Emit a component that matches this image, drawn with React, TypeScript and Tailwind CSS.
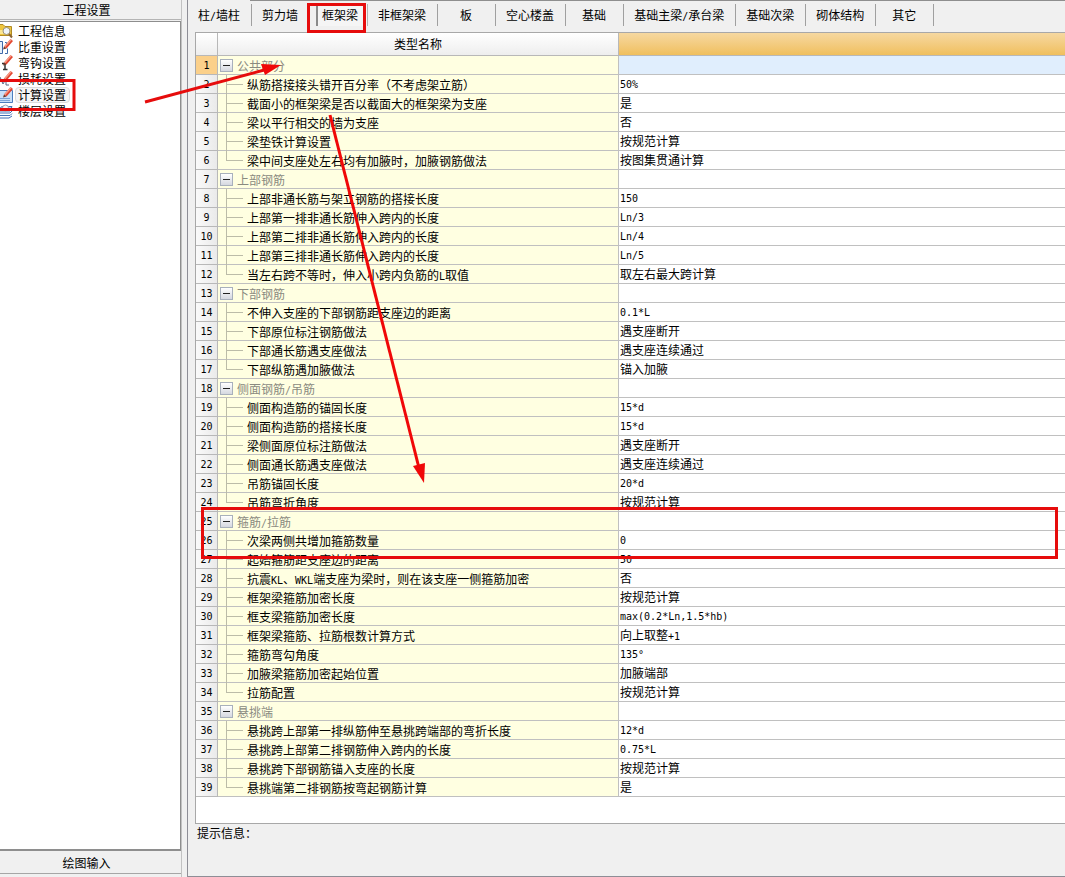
import { Fragment, type ReactNode } from 'react';

type Row = { group: string } | { name: string; value: string };

const tabs = ['柱/墙柱', '剪力墙', '框架梁', '非框架梁', '板', '空心楼盖', '基础', '基础主梁/承台梁', '基础次梁', '砌体结构', '其它'];

const rows: Row[] = [
  { group: '公共部分' },
  { name: '纵筋搭接接头错开百分率（不考虑架立筋）', value: '50%' },
  { name: '截面小的框架梁是否以截面大的框架梁为支座', value: '是' },
  { name: '梁以平行相交的墙为支座', value: '否' },
  { name: '梁垫铁计算设置', value: '按规范计算' },
  { name: '梁中间支座处左右均有加腋时，加腋钢筋做法', value: '按图集贯通计算' },
  { group: '上部钢筋' },
  { name: '上部非通长筋与架立钢筋的搭接长度', value: '150' },
  { name: '上部第一排非通长筋伸入跨内的长度', value: 'Ln/3' },
  { name: '上部第二排非通长筋伸入跨内的长度', value: 'Ln/4' },
  { name: '上部第三排非通长筋伸入跨内的长度', value: 'Ln/5' },
  { name: '当左右跨不等时，伸入小跨内负筋的L取值', value: '取左右最大跨计算' },
  { group: '下部钢筋' },
  { name: '不伸入支座的下部钢筋距支座边的距离', value: '0.1*L' },
  { name: '下部原位标注钢筋做法', value: '遇支座断开' },
  { name: '下部通长筋遇支座做法', value: '遇支座连续通过' },
  { name: '下部纵筋遇加腋做法', value: '锚入加腋' },
  { group: '侧面钢筋/吊筋' },
  { name: '侧面构造筋的锚固长度', value: '15*d' },
  { name: '侧面构造筋的搭接长度', value: '15*d' },
  { name: '梁侧面原位标注筋做法', value: '遇支座断开' },
  { name: '侧面通长筋遇支座做法', value: '遇支座连续通过' },
  { name: '吊筋锚固长度', value: '20*d' },
  { name: '吊筋弯折角度', value: '按规范计算' },
  { group: '箍筋/拉筋' },
  { name: '次梁两侧共增加箍筋数量', value: '0' },
  { name: '起始箍筋距支座边的距离', value: '50' },
  { name: '抗震KL、WKL端支座为梁时，则在该支座一侧箍筋加密', value: '否' },
  { name: '框架梁箍筋加密长度', value: '按规范计算' },
  { name: '框支梁箍筋加密长度', value: 'max(0.2*Ln,1.5*hb)' },
  { name: '框架梁箍筋、拉筋根数计算方式', value: '向上取整+1' },
  { name: '箍筋弯勾角度', value: '135°' },
  { name: '加腋梁箍筋加密起始位置', value: '加腋端部' },
  { name: '拉筋配置', value: '按规范计算' },
  { group: '悬挑端' },
  { name: '悬挑跨上部第一排纵筋伸至悬挑跨端部的弯折长度', value: '12*d' },
  { name: '悬挑跨上部第二排钢筋伸入跨内的长度', value: '0.75*L' },
  { name: '悬挑跨下部钢筋锚入支座的长度', value: '按规范计算' },
  { name: '悬挑端第二排钢筋按弯起钢筋计算', value: '是' },
];

const isLatin = (text: string) => /^[\x20-\x7e°]+$/.test(text);

// Sets Latin runs in a half-width monospace face beside the full-width Chinese glyphs.
function Mixed({ text }: { text: string }) {
  return (
    <>
      {text.split(/([\x20-\x7e°]+)/).map((part, i) =>
        i % 2 ? (
          <span key={i} className="font-['DejaVu_Sans_Mono',monospace] text-[10px] leading-none">
            {part}
          </span>
        ) : (
          <Fragment key={i}>{part}</Fragment>
        ),
      )}
    </>
  );
}

const pencil = (
  <>
    <path d="M13.5 0 L16 2 L9.5 9.5 L7 7.5 Z" fill="#e2452f" />
    <path d="M13.5 0 L14.6 0.9 L8.1 8.4 L7 7.5 Z" fill="#f79c88" />
    <path d="M7 7.5 L9.5 9.5 L6 10.5 Z" fill="#6d3a2c" />
  </>
);

const navItems: { label: string; icon: ReactNode }[] = [
  {
    label: '工程信息',
    icon: (
      <>
        <path d="M0 1.5 H6 L8 3.5 H14.5 V12.5 H0 Z" fill="#efc63f" stroke="#b08a24" />
        <path d="M1 7 H8 V11 H1 Z" fill="#fbe795" />
        <circle cx="9.5" cy="8" r="3.5" fill="#eef5fc" stroke="#9a9078" />
        <path d="M12 11 L15 14.5" stroke="#8b6432" strokeWidth="2" />
      </>
    ),
  },
  {
    label: '比重设置',
    icon: (
      <>
        <path d="M3 2.5 H5.5 V14.5 H3" fill="#e8f0fa" stroke="#3f68a8" />
        <path d="M8 3.5 H9.5 V6 M10.5 9.5 V14.5 H8" fill="none" stroke="#3f68a8" />
        {pencil}
      </>
    ),
  },
  {
    label: '弯钩设置',
    icon: (
      <>
        <path d="M5 8.5 H9 M8 8 V14 M6 14.5 H10.5" fill="none" stroke="#333" strokeWidth="1.5" />
        {pencil}
      </>
    ),
  },
  {
    label: '损耗设置',
    icon: (
      <>
        <path d="M3 6 L6 13 L9 8 V14 L12 14" fill="none" stroke="#5b6684" />
        {pencil}
      </>
    ),
  },
  {
    label: '计算设置',
    icon: (
      <>
        <path d="M1 3.5 H15.5 V15.5 H1 Z" fill="#c9e0f8" stroke="#4b7dbd" />
        <path d="M3 11.5 H13 M3 13.5 H13" stroke="#7ba5d8" />
        {pencil}
      </>
    ),
  },
  {
    label: '楼层设置',
    icon: (
      <>
        <path d="M1 7 L5 3.5 H15 L13 8 H1 Z" fill="#b9d3f2" stroke="#4674b5" />
        <path d="M1 10 H13 L15 8 M1 12.5 H13 L15 10.5 M1 15 H12 L15 13" fill="none" stroke="#3f6fb5" />
        <circle cx="8.5" cy="5" r="3" fill="#f2f7fc" stroke="#9aa5b5" />
      </>
    ),
  },
];

function Sidebar() {
  return (
    <aside className="flex w-[182px] shrink-0 flex-col border-r border-[#c2c2c2]">
      <button className="h-5 shrink-0 border-b border-[#b4b4b4] pr-2 leading-[18px]">工程设置</button>
      <ul className="mt-px flex-1 border-t border-r border-b-2 border-[#8e8e8e] bg-white pt-px">
        {navItems.map((item) => (
          <li key={item.label} className="h-4">
            <button className="flex h-4 items-center leading-4">
              <svg viewBox="3 0 13 16" className="h-4 w-[13px]" fill="none" aria-hidden="true">
                {item.icon}
              </svg>
              <span
                className={
                  item.label === '计算设置'
                    ? 'ml-0.5 h-4 rounded-sm border border-[#dcdcdc] bg-[#f5f5f5] pr-[3px] pl-0.5 leading-[14px]'
                    : 'ml-0.5 h-4 pl-[3px] leading-4'
                }
              >
                {item.label}
              </span>
            </button>
          </li>
        ))}
      </ul>
      <button className="mt-px h-[22px] shrink-0 border-b border-[#a6a6a6] pr-2 leading-5">绘图输入</button>
      <div className="h-[3px]" />
    </aside>
  );
}

function TabBar() {
  return (
    <div className="flex h-8 shrink-0 flex-col">
      <div className="ml-[62px] h-px shrink-0 bg-[#8e8e8e]" />
      <div role="tablist" className="flex overflow-hidden pt-[3px]">
        {tabs.map((tab, i) => (
          <button
            key={tab}
            role="tab"
            aria-selected={i === 2}
            className={
              i === 2
                ? 'ml-1.5 h-[22px] shrink-0 border-r border-l-2 border-r-[#b4b4b4] border-l-[#8a8a8a] bg-[#f5f5f5] pr-[9px] pl-1 leading-5'
                : i === 1
                  ? 'h-[22px] min-w-[58px] shrink-0 pr-3 pl-[10px] leading-5'
                  : 'h-[22px] min-w-[58px] shrink-0 border-r border-[#a0a0a0] pr-[11px] pl-[10px] leading-5'
            }
          >
            <Mixed text={tab} />
          </button>
        ))}
      </div>
    </div>
  );
}

function TreeLines({ last }: { last: boolean }) {
  return (
    <svg className="h-[19px] w-[18px] shrink-0" fill="none" stroke="#bcbca8" shapeRendering="crispEdges" aria-hidden="true">
      <path d={last ? 'M0.5 0 V9.5 H17' : 'M0.5 0 V19 M0.5 9.5 H17'} />
    </svg>
  );
}

function SettingsTable() {
  return (
    <table className="w-full table-fixed border-separate border-spacing-0">
      <colgroup>
        <col className="w-[22px]" />
        <col className="w-[401px]" />
        <col />
      </colgroup>
      <thead>
        <tr>
          <th className="h-[23px] border-r border-b border-[#b8b8b8] bg-linear-to-b from-white to-[#eeeeee] p-0" />
          <th className="h-[23px] border-r border-b border-[#b8b8b8] bg-linear-to-b from-white to-[#eeeeee] p-0 text-center leading-[22px] font-normal">
            类型名称
          </th>
          <th className="h-[23px] border-b border-[#b8b8b8] bg-linear-to-b from-[#f6d8a0] to-[#f0bf5c] p-0" />
        </tr>
      </thead>
      <tbody>
        {rows.map((row, i) => {
          const next = rows[i + 1];
          const last = !next || 'group' in next;
          return (
            <tr key={i}>
              <th
                scope="row"
                className={
                  i === 0
                    ? 'h-[19px] border-r border-b border-[#b8b8b8] bg-[#fbd08a] p-0 text-center font-normal'
                    : 'h-[19px] border-r border-b border-[#b8b8b8] bg-linear-to-r from-[#fafafa] to-[#eaeaea] p-0 text-center font-normal'
                }
              >
                <div className="h-[18px] overflow-hidden leading-4">
                  <Mixed text={String(i + 1)} />
                </div>
              </th>
              <td className="h-[19px] border-r border-b border-[#c0c0c0] bg-[#ffffe1] p-0">
                {'group' in row ? (
                  <div className="flex h-[18px] items-center pl-0.5 leading-[18px] text-[#8a8a80]">
                    <button
                      aria-label={row.group}
                      aria-expanded="true"
                      className="flex size-[13px] items-center justify-center border border-[#a8b0bc] bg-linear-to-b from-white to-[#d5d8e0]"
                    >
                      <span className="h-px w-[7px] bg-[#222]" />
                    </button>
                    <span className="h-[18px] pl-1 leading-5 whitespace-nowrap">
                      <Mixed text={row.group} />
                    </span>
                  </div>
                ) : (
                  <div className="flex h-[18px] pl-2 whitespace-nowrap">
                    <TreeLines last={last} />
                    <span className="h-[18px] pl-[3px] leading-5">
                      <Mixed text={row.name} />
                    </span>
                  </div>
                )}
              </td>
              <td className={i === 0 ? 'h-[19px] border-b border-[#c0c0c0] bg-[#e0eefd] p-0' : 'h-[19px] border-b border-[#c0c0c0] bg-white p-0'}>
                {'value' in row && (
                  <div
                    className={
                      isLatin(row.value)
                        ? 'h-[18px] overflow-hidden pl-px leading-4 whitespace-nowrap'
                        : 'h-[18px] overflow-hidden pl-px leading-[18px] whitespace-nowrap'
                    }
                  >
                    <Mixed text={row.value} />
                  </div>
                )}
              </td>
            </tr>
          );
        })}
      </tbody>
    </table>
  );
}

function Annotations() {
  return (
    <svg className="pointer-events-none absolute inset-0 size-full" fill="none" stroke="#e60c0c" strokeWidth="3" aria-hidden="true">
      <rect x="-3" y="80.5" width="77" height="29" />
      <rect x="308.5" y="4.5" width="56" height="27" />
      <rect x="202.5" y="508.5" width="854" height="49" />
      <path d="M145 102 L266 69.5" />
      <path d="M281 65 L261 64 L265 75 Z" fill="#f00808" stroke="none" />
      <path d="M330 115 L419 468" stroke="#f00808" />
      <path d="M424 483 L413 466 L425 463 Z" fill="#f00808" stroke="none" />
    </svg>
  );
}

export default function App() {
  return (
    <div className="relative flex min-h-screen overflow-hidden bg-[#f0f0f0] font-['Noto_Sans_CJK_SC',sans-serif] text-[12px] text-black">
      <Sidebar />
      <main className="ml-[5px] flex min-w-0 flex-1 flex-col border-b border-l border-[#8e8e96]">
        <TabBar />
        <div className="ml-[7px] flex-1 border border-r-0 border-[#a8a8a8] bg-white">
          <SettingsTable />
        </div>
        <p className="ml-[7px] h-[52px] shrink-0 pl-0.5 leading-[18px]">提示信息：</p>
      </main>
      <Annotations />
    </div>
  );
}
